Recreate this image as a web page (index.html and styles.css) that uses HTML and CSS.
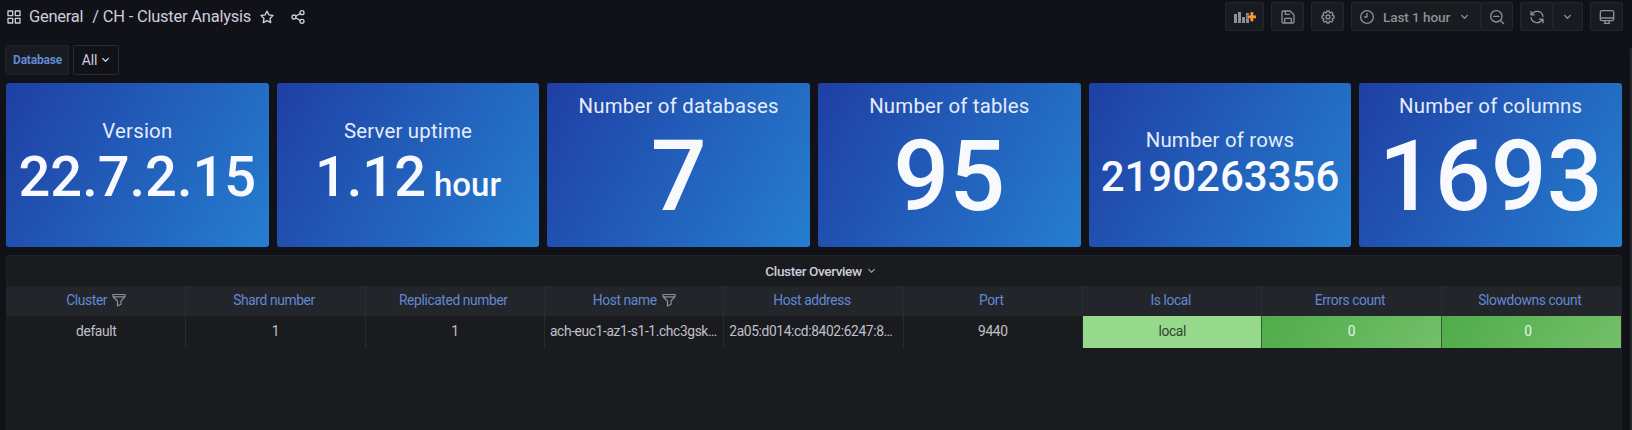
FILE: index.html
```html
<!DOCTYPE html>
<html lang="en">
<head>
<meta charset="utf-8">
<title>CH - Cluster Analysis</title>
<link rel="stylesheet" href="styles.css">
</head>
<body>
<header class="topbar">
  <div class="crumbs">
    <svg class="icon" viewBox="0 0 24 24"><path d="M3 3h7v7H3zM14 3h7v7h-7zM3 14h7v7H3zM14 14h7v7h-7z"/></svg>
    <span class="folder">General</span><span class="dash">/ CH - Cluster Analysis</span>
    <svg class="icon star" viewBox="0 0 24 24"><path d="M12 3l2.800 5.800 6.200.9-4.500 4.400 1.100 6.300L12 17.500l-5.600 2.900 1.100-6.300L3 9.700l6.200-.9z"/></svg>
    <svg class="icon share" viewBox="0 0 24 24"><circle cx="18" cy="5.500" r="3"/><circle cx="6" cy="12" r="3"/><circle cx="18" cy="18.500" r="3"/><path d="M8.700 10.500l6.600-3.500M8.700 13.500l6.600 3.500"/></svg>
  </div>
  <div class="tools">
    <button class="btn add"><svg class="bars" viewBox="0 0 22 14"><path d="M0 4h3v9H0zM4 2h3v11H4zM8 7h3v6H8zM12 3h3v10h-3z"/><path class="plus" d="M16.300 2h3.200v3.200h3v3.200h-3v3.200h-3.200V8.400h-3V5.200h3z"/></svg></button>
    <button class="btn sq"><svg class="icon" viewBox="0 0 24 24"><path d="M5 3h10l6 6v10a2 2 0 0 1-2 2H5a2 2 0 0 1-2-2V5a2 2 0 0 1 2-2zM8 3v5h6M7 21v-6a1 1 0 0 1 1-1h8a1 1 0 0 1 1 1v6"/></svg></button>
    <button class="btn sq"><svg class="icon solid" viewBox="0 0 24 24"><path d="M21.320,9.550l-1.890-.63.89-1.780A1,1,0,0,0,20.130,6L18,3.870a1,1,0,0,0-1.150-.19l-1.780.89-.63-1.890A1,1,0,0,0,13.500,2h-3a1,1,0,0,0-.95.68L8.920,4.570,7.140,3.680A1,1,0,0,0,6,3.870L3.870,6a1,1,0,0,0-.19,1.150l.89,1.780-1.890.63A1,1,0,0,0,2,10.500v3a1,1,0,0,0,.68.95l1.890.63-.89,1.780A1,1,0,0,0,3.870,18L6,20.130a1,1,0,0,0,1.150.19l1.780-.89.63,1.890a1,1,0,0,0,.95.68h3a1,1,0,0,0,.95-.68l.63-1.890,1.780.89A1,1,0,0,0,18,20.130L20.130,18a1,1,0,0,0,.19-1.150l-.89-1.780,1.890-.63A1,1,0,0,0,22,13.500v-3A1,1,0,0,0,21.320,9.550ZM20,12.780l-1.200.4A2,2,0,0,0,17.640,16l.57,1.140-1.100,1.100L16,17.640a2,2,0,0,0-2.790,1.160l-.4,1.200H11.220l-.4-1.200A2,2,0,0,0,8,17.640l-1.140.57-1.100-1.100L6.360,16A2,2,0,0,0,5.200,13.180L4,12.780V11.220l1.200-.4A2,2,0,0,0,6.360,8L5.790,6.890l1.100-1.100L8,6.360A2,2,0,0,0,10.820,5.200l.4-1.200h1.560l.4,1.200A2,2,0,0,0,16,6.360l1.140-.57,1.100,1.100L17.640,8a2,2,0,0,0,1.160,2.790l1.200.4ZM12,8a4,4,0,1,0,4,4A4,4,0,0,0,12,8Zm0,6a2,2,0,1,1,2-2A2,2,0,0,1,12,14Z"/></svg></button>
    <div class="group">
      <button class="btn time"><svg class="icon" viewBox="0 0 24 24"><circle cx="12" cy="12" r="9.500"/><path d="M12 6.500V12H8.500"/></svg><span>Last 1 hour</span><svg class="chev" viewBox="0 0 10 6"><path d="M1.800 1.200L5 4.400l3.200-3.200"/></svg></button>
      <button class="btn zoom"><svg class="icon" viewBox="0 0 24 24"><circle cx="11" cy="11" r="8.500"/><path d="M17 17l5 5M7 11h8"/></svg></button>
    </div>
    <div class="group">
      <button class="btn sq"><svg class="icon" viewBox="0 0 24 24"><path d="M4 8.500A9 9 0 0 1 20.900 11M3 3.500v5.200h5.200M20 15.500A9 9 0 0 1 3.100 13M21 20.500v-5.200h-5.200"/></svg></button>
      <button class="btn drop"><svg class="chev" viewBox="0 0 10 6"><path d="M1.800 1.200L5 4.400l3.200-3.200"/></svg></button>
    </div>
    <button class="btn sq"><svg class="icon" viewBox="0 0 24 24"><rect x="2" y="2.500" width="20" height="15" rx="2.500"/><path d="M2 13.500h20M9 18v3M15 18v3M8 21.500h8"/></svg></button>
  </div>
</header>
<div class="vars">
  <label class="var-label">Database</label>
  <button class="var-value"><span>All</span><svg class="chev" viewBox="0 0 10 6"><path d="M1.800 1.200L5 4.400l3.200-3.200"/></svg></button>
</div>
<main class="board">
  <section class="stats">
    <div class="stat"><div class="name">Version</div><div class="value medium">22.7.2.15</div></div>
    <div class="stat"><div class="name">Server uptime</div><div class="value medium">1.12<span class="unit">hour</span></div></div>
    <div class="stat"><div class="name">Number of databases</div><div class="value large">7</div></div>
    <div class="stat"><div class="name">Number of tables</div><div class="value large">95</div></div>
    <div class="stat"><div class="name">Number of rows</div><div class="value small">2190263356</div></div>
    <div class="stat"><div class="name">Number of columns</div><div class="value large">1693</div></div>
  </section>
  <section class="panel">
    <h2 class="panel-title"><span>Cluster Overview</span><svg class="chev" viewBox="0 0 10 6"><path d="M1.800 1.200L5 4.400l3.200-3.200"/></svg></h2>
    <div class="row head">
      <div class="cell filtered"><span>Cluster</span><svg class="funnel" viewBox="0 0 14 14"><path d="M1 1.500h12v2.200L9 8v3.200l-3.500 1.800V8L1 3.700zM1 3.900h12"/></svg></div>
      <div class="cell">Shard number</div>
      <div class="cell">Replicated number</div>
      <div class="cell filtered"><span>Host name</span><svg class="funnel" viewBox="0 0 14 14"><path d="M1 1.500h12v2.200L9 8v3.200l-3.500 1.800V8L1 3.700zM1 3.900h12"/></svg></div>
      <div class="cell">Host address</div>
      <div class="cell">Port</div>
      <div class="cell">Is local</div>
      <div class="cell">Errors count</div>
      <div class="cell">Slowdowns count</div>
    </div>
    <div class="row body">
      <div class="cell">default</div>
      <div class="cell">1</div>
      <div class="cell">1</div>
      <div class="cell long">ach-euc1-az1-s1-1.chc3gsk…</div>
      <div class="cell long">2a05:d014:cd:8402:6247:8…</div>
      <div class="cell">9440</div>
      <div class="cell local">local</div>
      <div class="cell good">0</div>
      <div class="cell good">0</div>
    </div>
  </section>
</main>
<div class="scroll"></div>
</body>
</html>
```
FILE: styles.css
```css
* { box-sizing: border-box; }
body {
  margin: 0;
  height: 430px;
  overflow: hidden;
  background: #111217;
  color: #ccccdc;
  font-family: Roboto, "Liberation Sans", sans-serif;
  font-size: 13.8px;
  letter-spacing: -0.38px;
}
button { font: inherit; letter-spacing: inherit; color: inherit; padding: 0; margin: 0; }
svg { display: block; flex: none; fill: none; stroke: currentColor; }
.icon { width: 16px; height: 16px; stroke-width: 2; stroke-linejoin: round; stroke-linecap: round; }
.icon.solid { fill: currentColor; stroke: none; }
.chev { width: 9px; height: 6px; stroke-width: 1.5; stroke-linecap: round; stroke-linejoin: round; }

.topbar { height: 45px; display: flex; justify-content: space-between; padding: 2px 9px 0 6px; }
.crumbs { display: flex; align-items: center; height: 29px; font-size: 16.5px; letter-spacing: -0.25px; white-space: pre; }
.folder { margin-left: 7px; }
.dash { margin-left: 9px; letter-spacing: -0.23px; }
.star { margin-left: 8px; }
.share { margin-left: 15px; }

.tools { display: flex; gap: 7px; height: 29px; color: #8e8f99; }
.group { display: flex; }
.btn {
  display: flex; align-items: center; justify-content: center;
  height: 29px;
  background: #181b1f;
  border: 1px solid #24262b;
  border-radius: 2px;
}
.add { width: 39px; }
.sq { width: 33px; }
.drop { width: 31px; margin-left: -1px; }
.time { width: 130px; justify-content: flex-start; padding-left: 7px; font-weight: 500; font-size: 13.6px; letter-spacing: -0.1px; gap: 8px; }
.time .chev { margin-left: 2px; }
.zoom { width: 33px; margin-left: -1px; }
.bars { width: 22px; height: 14px; fill: #8e8f99; stroke: none; }
.plus { fill: #ff9830; stroke: #181b1f; stroke-width: 0.4; }

.vars { display: flex; gap: 4px; height: 38px; padding-left: 5px; }
.var-label {
  display: flex; align-items: center; justify-content: center;
  width: 64px; height: 30px; padding-left: 1px;
  background: #181b1f; border: 1px solid #222429; border-radius: 2px;
  color: #6189d6; font-size: 12px; font-weight: 700; letter-spacing: -0.2px;
}
.var-value {
  display: flex; align-items: center; justify-content: center; gap: 4px;
  width: 46px; height: 30px;
  background: #111217; border: 1px solid #2b2d33; border-radius: 2px;
}
.var-value span { font-size: 14px; letter-spacing: -0.1px; }

.board { padding: 0 10px 0 6px; }
.stats { display: grid; grid-template-columns: repeat(6, 1fr); gap: 8px; height: 164px; }
.stat {
  display: flex; flex-direction: column; align-items: center; justify-content: center;
  border-radius: 3px;
  background: linear-gradient(120deg, #1f3fa5, #257ecf);
  color: #f7f9fd; line-height: 1.2; white-space: nowrap;
}
.name { font-size: 20.4px; letter-spacing: 0.2px; color: #e5edfa; }
.value { font-weight: 500; letter-spacing: 0; }
.small { font-size: 42px; }
.medium { font-size: 56px; }
.large { font-size: 98.5px; }
.unit { font-size: 33px; margin-left: 8px; }

.panel {
  height: 180px; margin-top: 8px;
  background: #1a1b1f;
  border: 1px solid #202227; border-radius: 3px;
}
.panel-title {
  display: flex; align-items: center; justify-content: center; gap: 5px;
  height: 30px; margin: 0; padding: 0 0 1px 13px;
  font-size: 13.6px; font-weight: 500; letter-spacing: -0.4px;
}
.panel-title .chev { color: #8e8f99; }
.row { display: grid; grid-template-columns: repeat(9, 1fr); }
.cell {
  display: flex; align-items: center; justify-content: center; gap: 5px;
  padding-bottom: 2px;
  border-right: 1px solid #292b30;
  white-space: nowrap; overflow: hidden;
}
.cell:last-child { border-right: 0; }
.head { height: 30px; background: #22252a; color: #6189d6; }
.head .cell { padding-right: 3px; }
.head .filtered { padding-right: 0; }
.body { height: 32px; color: #c0c0cb; }
.body .cell:last-child { padding-right: 7px; }
.body .long { justify-content: flex-start; padding-left: 5px; }
.funnel { width: 14px; height: 14px; color: #8e8f99; stroke-width: 1.2; stroke-linejoin: round; }
.local { background: #96d98d; color: #32442f; border-color: #365d33; }
.good { background: linear-gradient(120deg, #50ac4a, #73bf69); color: #e4f5e2; border-color: #365d33; }
.scroll { position: absolute; right: 0; top: 48px; width: 2px; height: 382px; background: #28292e; border-radius: 2px 0 0 0; }
```
